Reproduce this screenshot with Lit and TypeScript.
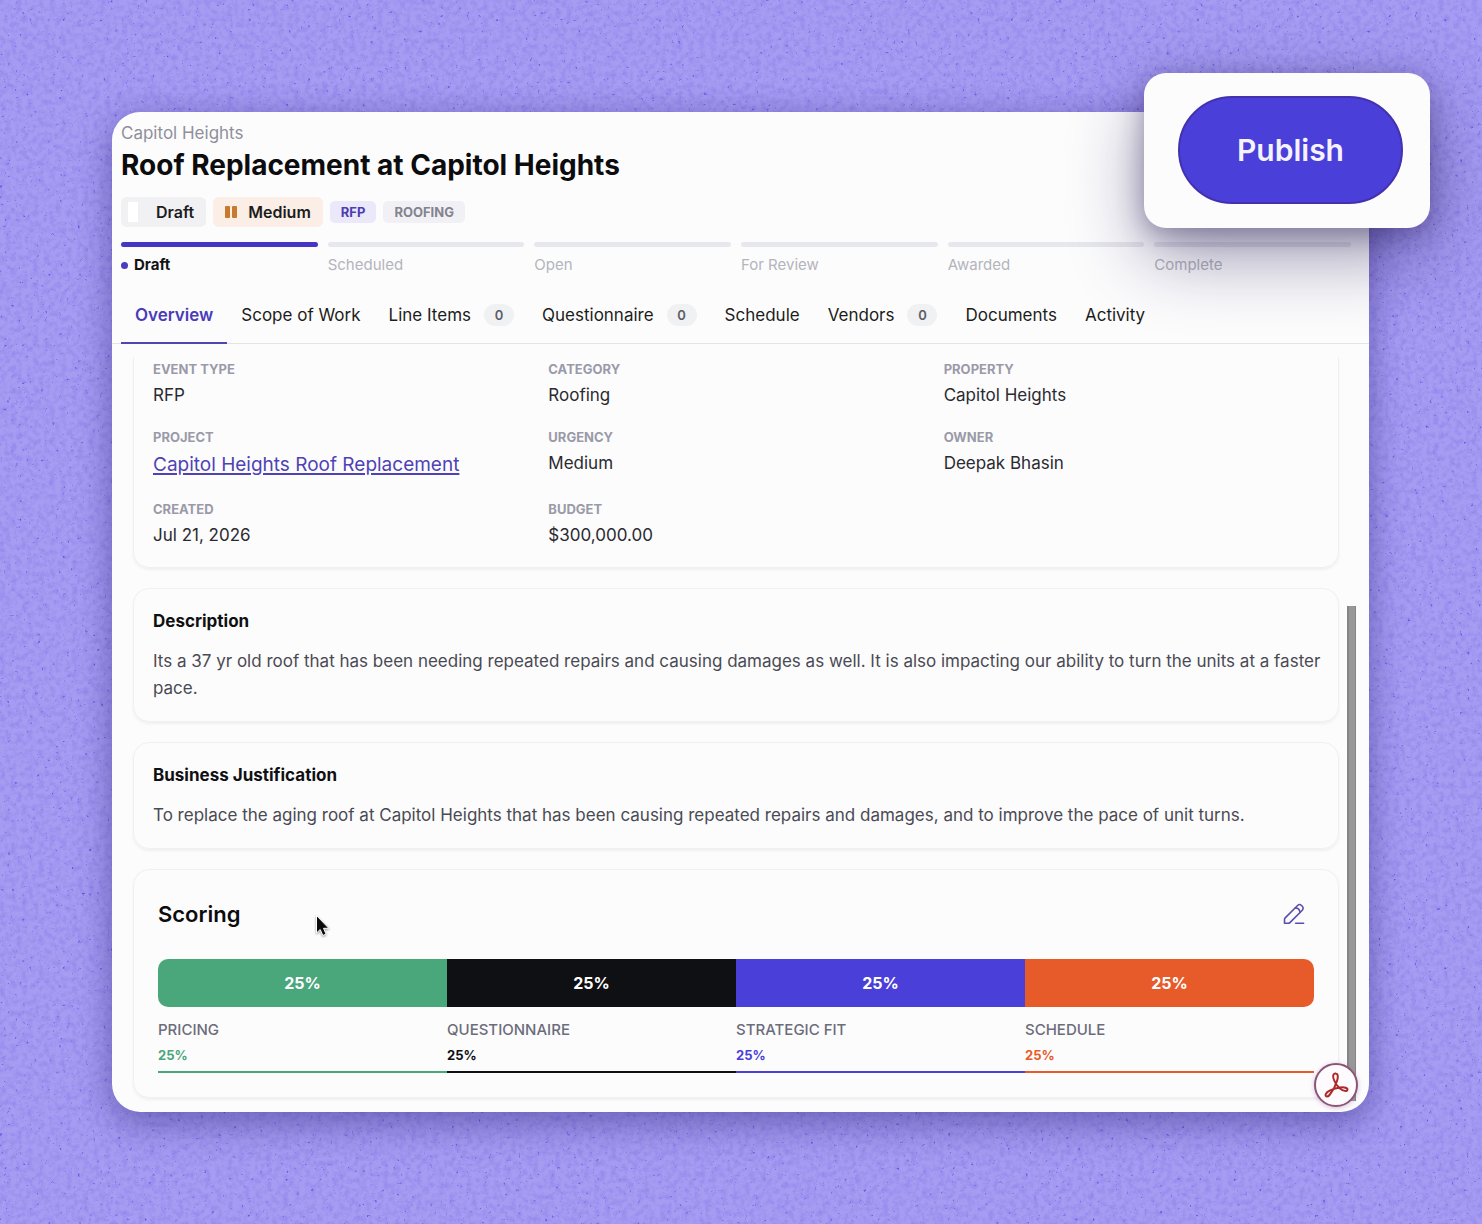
import { LitElement, html, css, svg, nothing } from "lit";
import { customElement, property, state } from "lit/decorators.js";
import { classMap } from "lit/directives/class-map.js";
import { styleMap } from "lit/directives/style-map.js";

interface Tab {
  label: string;
  count?: number;
}

interface Field {
  label: string;
  value: string;
  link?: boolean;
}

interface Score {
  label: string;
  weight: number;
  color: string;
}

const STAGES = ["Draft", "Scheduled", "Open", "For Review", "Awarded", "Complete"];

const TABS: Tab[] = [
  { label: "Overview" },
  { label: "Scope of Work" },
  { label: "Line Items", count: 0 },
  { label: "Questionnaire", count: 0 },
  { label: "Schedule" },
  { label: "Vendors", count: 0 },
  { label: "Documents" },
  { label: "Activity" },
];

const FIELDS: Field[] = [
  { label: "Event Type", value: "RFP" },
  { label: "Category", value: "Roofing" },
  { label: "Property", value: "Capitol Heights" },
  { label: "Project", value: "Capitol Heights Roof Replacement", link: true },
  { label: "Urgency", value: "Medium" },
  { label: "Owner", value: "Deepak Bhasin" },
  { label: "Created", value: "Jul 21, 2026" },
  { label: "Budget", value: "$300,000.00" },
];

const SCORES: Score[] = [
  { label: "Pricing", weight: 25, color: "#4aa67b" },
  { label: "Questionnaire", weight: 25, color: "#0f1014" },
  { label: "Strategic Fit", weight: 25, color: "#4a3fd8" },
  { label: "Schedule", weight: 25, color: "#e75b2a" },
];

/* Speckled paper texture behind the window. */
@customElement("paper-texture")
export class PaperTexture extends LitElement {
  static styles = css`
    :host {
      position: absolute;
      inset: 0;
      overflow: hidden;
    }
    .texture {
      display: block;
      width: 100%;
      height: 100%;
    }
  `;

  render() {
    return html`<svg class="texture" aria-hidden="true">
      <filter id="mottle" x="0" y="0" width="100%" height="100%" color-interpolation-filters="sRGB">
        <feTurbulence type="fractalNoise" baseFrequency="0.18" numOctaves="4" seed="4" />
        <feColorMatrix values="0 0 0 0 0.46  0 0 0 0 0.40  0 0 0 0 0.86  0.7 0 0 0 -0.26" />
      </filter>
      <filter id="specks" x="0" y="0" width="100%" height="100%" color-interpolation-filters="sRGB">
        <feTurbulence type="fractalNoise" baseFrequency="0.27" numOctaves="3" seed="11" />
        <feColorMatrix values="0 0 0 0 0.38  0 0 0 0 0.32  0 0 0 0 0.88  0 5 0 0 -3.55" />
      </filter>
      <rect width="100%" height="100%" filter="url(#mottle)" />
      <rect width="100%" height="100%" filter="url(#specks)" />
    </svg>`;
  }
}

/* Row of stage bars; the current one is filled. */
@customElement("stage-track")
export class StageTrack extends LitElement {
  @property({ type: Number }) current = 0;

  static styles = css`
    :host {
      display: block;
    }
    .track {
      display: grid;
      grid-template-columns: repeat(6, 1fr);
      gap: 10px;
      margin: 0;
      padding: 0;
      list-style: none;
    }
    .stage {
      display: flex;
      flex-wrap: wrap;
      align-items: center;
      gap: 8px 6px;
      font-size: 15px;
      line-height: 20px;
      color: #b4b4bc;
    }
    .bar {
      flex: 0 0 100%;
      height: 5px;
      border-radius: 3px;
      background: #e7e7ee;
    }
    .current {
      color: #131316;
      font-weight: 700;
    }
    .current .bar {
      background: #4537c4;
    }
    .dot {
      width: 7px;
      height: 7px;
      border-radius: 50%;
      background: #4a3cc0;
    }
  `;

  render() {
    return html`<ol class="track">
      ${STAGES.map((name, i) => {
        const current = i === this.current;
        return html`<li class=${classMap({ stage: true, current })}>
          <span class="bar"></span>
          ${current ? html`<span class="dot"></span>` : nothing}
          <span>${name}</span>
        </li>`;
      })}
    </ol>`;
  }
}

/* Weighted bar with a legend below. */
@customElement("score-breakdown")
export class ScoreBreakdown extends LitElement {
  static styles = css`
    :host {
      display: block;
    }
    .bar,
    .legend {
      display: flex;
      margin: 0;
      padding: 0;
      list-style: none;
    }
    .bar {
      height: 48px;
      border-radius: 10px;
      overflow: hidden;
    }
    .segment {
      display: flex;
      align-items: center;
      justify-content: center;
      color: #fff;
      font-size: 16px;
      font-weight: 700;
    }
    .legend {
      margin-top: 13px;
    }
    .entry {
      display: flex;
      flex-direction: column;
      gap: 5px;
      padding-bottom: 6px;
      border-bottom: 2px solid currentColor;
      line-height: 20px;
    }
    .name {
      color: #6c6c7a;
      font-size: 15px;
      font-weight: 500;
      text-transform: uppercase;
    }
    .value {
      font-size: 13px;
      font-weight: 700;
    }
  `;

  render() {
    return html`
      <ul class="bar">
        ${SCORES.map(
          (s) => html`<li class="segment" style=${styleMap({ width: `${s.weight}%`, background: s.color })}>
            ${s.weight}%
          </li>`,
        )}
      </ul>
      <ul class="legend">
        ${SCORES.map(
          (s) => html`<li class="entry" style=${styleMap({ width: `${s.weight}%`, color: s.color })}>
            <span class="name">${s.label}</span>
            <span class="value">${s.weight}%</span>
          </li>`,
        )}
      </ul>
    `;
  }
}

const pencilIcon = svg`
  <path d="M2.500 21.300h3.800c.6 0 1.200-.25 1.600-.65L20.300 8.200c1.100-1.100 1.100-2.800 0-3.900l-.8-.8c-1.100-1.100-2.800-1.100-3.900 0L3.200 15.900c-.45.45-.7 1-.7 1.600z" />
  <path d="M13.300 5.900c2.700.2 4.500 2 4.700 4.600" />
  <path d="M13.600 21.300h8" />`;

const acrobatIcon = svg`
  <path d="M11 8C9 3 11 1 13 1.500C15.500 2 15 6 14 9C12.500 14 9 20 6.500 23C4.500 25.500 1.500 24.500 3 21.800C4.500 19 10 17 14.500 16C19 15 24.500 15 24.500 17.500C24.500 20 20 19 17 16.500C14 14 12 11 11 8z" />`;

@customElement("app-root")
export class AppRoot extends LitElement {
  @state() private tab = 0;

  static styles = css`
    :host {
      display: block;
      font-family: Inter, "Open Sans", sans-serif;
      font-size: 17px;
      color: #1c1c20;
    }
    * {
      box-sizing: border-box;
    }
    button {
      margin: 0;
      padding: 0;
      border: 0;
      background: none;
      font: inherit;
      color: inherit;
      cursor: pointer;
    }
    h1,
    h2,
    p,
    dl,
    dd {
      margin: 0;
    }
    .stage {
      position: relative;
      min-height: 100vh;
      padding: 112px 113px 112px 112px;
      background: #a69df3;
    }
    .window {
      position: relative;
      padding-bottom: 14px;
      border-radius: 28px;
      background: #fcfcfd;
      box-shadow:
        0 14px 36px rgba(40, 30, 110, 0.36),
        0 0 28px rgba(60, 45, 140, 0.2);
    }
    .head {
      padding: 10px 18px 0 9px;
    }
    .crumb {
      line-height: 22px;
      color: #8f8f9b;
    }
    .title {
      margin-top: 3px;
      font-size: 28px;
      line-height: 36px;
      font-weight: 700;
      color: #0c0c0e;
    }
    .tags {
      display: flex;
      align-items: center;
      gap: 7px;
      margin: 14px 0 15px;
    }
    .pill {
      display: flex;
      align-items: center;
      height: 30px;
      padding: 0 12px;
      border-radius: 6px;
      font-size: 16px;
      font-weight: 600;
      background: #f1f1f4;
    }
    .blank {
      width: 10px;
      height: 20px;
      margin-right: 18px;
      margin-left: -5px;
      background: #fff;
    }
    .pill.medium {
      background: #faeee6;
    }
    .pause {
      width: 12px;
      height: 12px;
      margin-right: 11px;
      fill: #c8792d;
    }
    .tag {
      height: 22px;
      padding: 0 11px;
      border-radius: 5px;
      font-size: 13px;
      line-height: 22px;
      font-weight: 700;
      text-transform: uppercase;
      color: #83838e;
      background: #f1f1f5;
    }
    .tag.type {
      color: #4b3db5;
      background: #ebe8fa;
    }
    .tabs {
      display: flex;
      margin-top: 12px;
      padding-left: 9px;
      border-bottom: 1px solid #e4e4e8;
    }
    .tab {
      display: flex;
      align-items: center;
      gap: 13px;
      height: 57px;
      margin-bottom: -1px;
      padding: 0 14px;
      border-bottom: 2px solid transparent;
    }
    .tab.active {
      color: #4a3cb8;
      border-color: #5145b4;
      font-weight: 600;
    }
    .count {
      min-width: 30px;
      height: 22px;
      border-radius: 11px;
      background: #f0f1f3;
      color: #5d5d66;
      font-size: 13px;
      line-height: 22px;
      font-weight: 600;
      text-align: center;
    }
    .body {
      display: flex;
      flex-direction: column;
      gap: 20px;
      padding: 13px 30px 0 21px;
    }
    .card {
      padding: 19px 12px 19px 19px;
      border: 1px solid #f0f0f2;
      border-radius: 16px;
      box-shadow: 0 2px 3px rgba(20, 20, 40, 0.05);
    }
    .card.details {
      padding: 3px 19px 20px;
      border-top: 0;
      border-radius: 0 0 16px 16px;
    }
    .card.scoring {
      padding: 24px;
    }
    .fields {
      display: grid;
      grid-template-columns: repeat(3, 1fr);
      gap: 21px 20px;
    }
    .term {
      margin-bottom: 5px;
      font-size: 13px;
      line-height: 18px;
      font-weight: 700;
      text-transform: uppercase;
      color: #9a9aa8;
    }
    .value {
      line-height: 24px;
      color: #2a2a30;
    }
    .link {
      display: inline-block;
      font-size: 19px;
      line-height: 28px;
      color: #4f42b5;
      text-decoration: underline;
      text-decoration-thickness: 2px;
      text-underline-offset: 2px;
    }
    .heading {
      margin-bottom: 14px;
      font-size: 17px;
      line-height: 26px;
      font-weight: 700;
      color: #101013;
    }
    .copy {
      line-height: 27px;
      color: #4a4a53;
    }
    .scoring-head {
      display: flex;
      align-items: center;
      justify-content: space-between;
      height: 40px;
      margin-bottom: 25px;
      padding-right: 8px;
    }
    .scoring-title {
      font-size: 22px;
      line-height: 28px;
      font-weight: 600;
      color: #0c0c0e;
    }
    .edit,
    .pencil {
      display: block;
      width: 24px;
      height: 24px;
    }
    .pencil {
      fill: none;
      stroke: #5a4fae;
      stroke-width: 1.6;
      stroke-linecap: round;
      stroke-linejoin: round;
    }
    .scrollbar {
      position: absolute;
      top: 494px;
      right: 13px;
      bottom: 11px;
      width: 9px;
      border: solid #858585;
      border-width: 0 1px 0 2px;
      background: #989898;
    }
    .acrobat {
      position: absolute;
      right: 11px;
      bottom: 5px;
      display: grid;
      place-items: center;
      width: 44px;
      height: 44px;
      border: 2px solid #8a5673;
      border-radius: 50%;
      background: #fdfbfd;
      box-shadow: 0 1px 5px rgba(150, 80, 160, 0.35);
    }
    .acrobat-mark {
      width: 26px;
      height: 26px;
      fill: none;
      stroke: #ac2a2a;
      stroke-width: 2;
      stroke-linejoin: round;
    }
    .publish-card {
      position: absolute;
      top: -39px;
      right: -61px;
      padding: 23px 27px 24px 34px;
      border-radius: 22px;
      background: #fcfcfd;
      box-shadow:
        0 28px 72px rgba(28, 18, 76, 0.42),
        0 6px 26px rgba(28, 18, 76, 0.34);
    }
    .publish {
      display: block;
      width: 225px;
      height: 108px;
      border: 2px solid #4331b0;
      border-radius: 54px;
      background: #4a3fd8;
      color: #f4f3ff;
      font-size: 30px;
      font-weight: 600;
    }
    .pointer {
      position: absolute;
      top: 802px;
      left: 203px;
      width: 16px;
      height: 24px;
      fill: #0b0b0d;
      stroke: #fff;
      stroke-width: 1;
      filter: drop-shadow(0 1px 1px rgba(0, 0, 0, 0.4));
    }
  `;

  private renderTab(t: Tab, i: number) {
    const active = i === this.tab;
    return html`<button
      class=${classMap({ tab: true, active })}
      role="tab"
      aria-selected=${active}
      @click=${() => (this.tab = i)}
    >
      <span>${t.label}</span>
      ${t.count === undefined ? nothing : html`<span class="count">${t.count}</span>`}
    </button>`;
  }

  render() {
    return html`<div class="stage">
      <paper-texture></paper-texture>
      <main class="window">
        <header class="head">
          <p class="crumb">Capitol Heights</p>
          <h1 class="title">Roof Replacement at Capitol Heights</h1>
          <div class="tags">
            <span class="pill"><span class="blank"></span>Draft</span>
            <span class="pill medium">
              <svg class="pause" viewBox="0 0 12 12" aria-hidden="true">
                <rect width="5" height="12" rx="1" />
                <rect x="7" width="5" height="12" rx="1" />
              </svg>
              Medium
            </span>
            <span class="tag type">RFP</span>
            <span class="tag">Roofing</span>
          </div>
          <stage-track .current=${0}></stage-track>
        </header>
        <nav class="tabs" role="tablist">${TABS.map((t, i) => this.renderTab(t, i))}</nav>
        <div class="body">
          <section class="card details">
            <dl class="fields">
              ${FIELDS.map(
                (f) => html`<div>
                  <dt class="term">${f.label}</dt>
                  <dd class="value">${f.link ? html`<a class="link" href="#project">${f.value}</a>` : f.value}</dd>
                </div>`,
              )}
            </dl>
          </section>
          <section class="card">
            <h2 class="heading">Description</h2>
            <p class="copy">
              Its a 37 yr old roof that has been needing repeated repairs and causing damages as well. It is also
              impacting our ability to turn the units at a faster pace.
            </p>
          </section>
          <section class="card">
            <h2 class="heading">Business Justification</h2>
            <p class="copy">
              To replace the aging roof at Capitol Heights that has been causing repeated repairs and damages, and to
              improve the pace of unit turns.
            </p>
          </section>
          <section class="card scoring">
            <div class="scoring-head">
              <h2 class="scoring-title">Scoring</h2>
              <button class="edit" aria-label="Edit scoring">
                <svg class="pencil" viewBox="0 0 24 24" aria-hidden="true">${pencilIcon}</svg>
              </button>
            </div>
            <score-breakdown></score-breakdown>
          </section>
        </div>
        <div class="scrollbar"></div>
        <button class="acrobat" aria-label="Open in Acrobat">
          <svg class="acrobat-mark" viewBox="0 0 26 26" aria-hidden="true">${acrobatIcon}</svg>
        </button>
        <svg class="pointer" viewBox="0 0 16 24" aria-hidden="true">
          <path d="M1.500 1.500v17.500l3.700-3.500 2.700 6 3.200-1.400-2.600-5.800h5.300z" />
        </svg>
        <div class="publish-card"><button class="publish">Publish</button></div>
      </main>
    </div>`;
  }
}
